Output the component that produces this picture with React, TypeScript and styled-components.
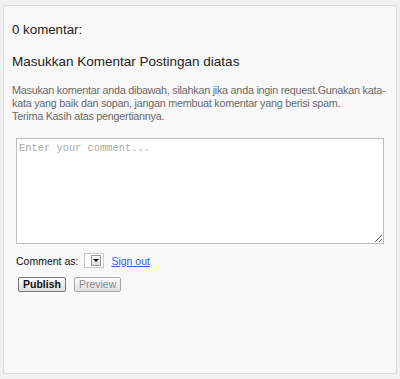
import React from "react";
import styled, { createGlobalStyle } from "styled-components";

const GlobalStyle = createGlobalStyle`
  html, body {
    margin: 0;
    padding: 0;
    background: #f1f1f1;
  }
  body {
    font-family: "Liberation Sans", Arial, sans-serif;
  }
`;

const Page = styled.div`
  width: 400px;
  height: 379px;
  padding: 5px 3px 0;
  box-sizing: border-box;
`;

const Panel = styled.div`
  height: 369px;
  box-sizing: border-box;
  background: #f8f8f8;
  border: 1px solid #dddddd;
  padding: 16px 8px 0;
`;

const Count = styled.h4`
  margin: 0;
  font-size: 13.3px;
  font-weight: normal;
  color: #222;
  line-height: 16px;
`;

const Heading = styled.h4`
  margin: 16px 0 0;
  font-size: 13.5px;
  font-weight: normal;
  color: #222;
  line-height: 16px;
`;

const Intro = styled.p`
  margin: 14px 0 0;
  font-size: 10.8px;
  letter-spacing: -0.25px;
  line-height: 13px;
  color: #6a6a6a;
  white-space: nowrap;
`;

const Form = styled.div`
  padding: 0 4px;
  margin-top: 15px;
`;

const CommentBox = styled.textarea`
  display: block;
  width: 368px;
  height: 106px;
  box-sizing: border-box;
  border: 1px solid #bdbdbd;
  background: #fff;
  margin: 0;
  padding: 3px 2px;
  resize: both;
  font-family: "Liberation Mono", "Courier New", monospace;
  font-size: 10.4px;
  &::placeholder {
    color: #aaa;
  }
`;

const IdentityRow = styled.div`
  display: flex;
  align-items: center;
  margin-top: 9px;
  font-size: 10.5px;
  color: #111;
`;

const Label = styled.span`
  margin-right: 6px;
`;

const Picker = styled.span`
  display: inline-flex;
  align-items: center;
  justify-content: flex-end;
  width: 20px;
  height: 15px;
  box-sizing: border-box;
  border: 1px solid #c8c8c8;
  background: #fff;
  padding-right: 2px;
  margin-right: 7px;
`;

const Arrow = styled.span`
  display: inline-flex;
  align-items: center;
  justify-content: center;
  width: 10px;
  height: 11px;
  box-sizing: border-box;
  border: 1px solid #999;
  background: linear-gradient(#fafafa, #dcdcdc);
  &::after {
    content: "";
    border-left: 3px solid transparent;
    border-right: 3px solid transparent;
    border-top: 3px solid #111;
  }
`;

const SignOut = styled.a`
  color: #3b5bdb;
  text-decoration: underline;
  font-size: 10.5px;
`;

const Buttons = styled.div`
  display: flex;
  gap: 8px;
  margin-top: 9px;
  padding-left: 2px;
`;

const Button = styled.button<{ $primary?: boolean }>`
  height: 15px;
  padding: 0 4px;
  font-family: "Liberation Sans", Arial, sans-serif;
  font-size: 10.5px;
  font-weight: ${(p) => (p.$primary ? "bold" : "normal")};
  color: ${(p) => (p.$primary ? "#111" : "#8a8a8a")};
  border: 1px solid ${(p) => (p.$primary ? "#777" : "#aaa")};
  border-radius: 2px;
  background: linear-gradient(#fdfdfd, #dedede);
  line-height: 11px;
`;

export default function App() {
  return (
    <Page>
      <GlobalStyle />
      <Panel>
        <Count>0 komentar:</Count>
        <Heading>Masukkan Komentar Postingan diatas</Heading>
        <Intro>
          Masukan komentar anda dibawah, silahkan jika anda ingin request.Gunakan kata-
          <br />
          kata yang baik dan sopan, jangan membuat komentar yang berisi spam.
          <br />
          Terima Kasih atas pengertiannya.
        </Intro>
        <Form>
          <CommentBox placeholder="Enter your comment..." />
          <IdentityRow>
            <Label>Comment as:</Label>
            <Picker>
              <Arrow />
            </Picker>
            <SignOut href="#">Sign out</SignOut>
          </IdentityRow>
          <Buttons>
            <Button $primary>Publish</Button>
            <Button disabled>Preview</Button>
          </Buttons>
        </Form>
      </Panel>
    </Page>
  );
}
